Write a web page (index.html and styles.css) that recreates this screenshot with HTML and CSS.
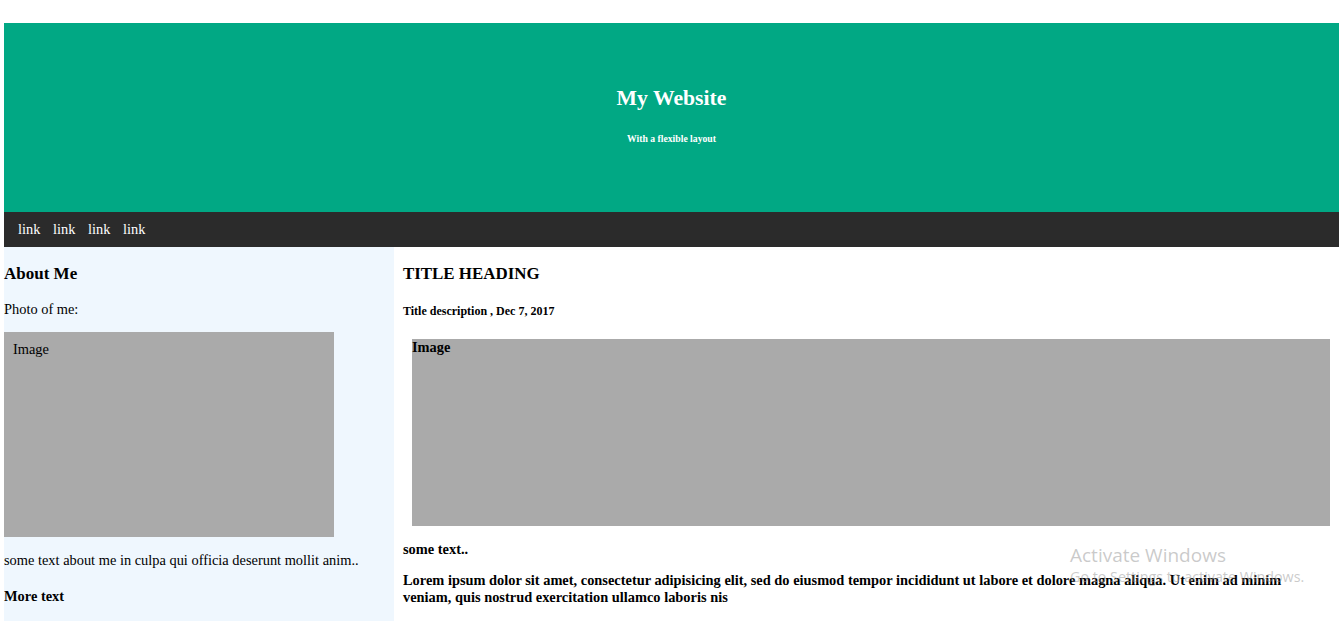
FILE: index.html
```html
<!DOCTYPE html>
<html>
<head>
<meta charset="utf-8">
<title>My Website</title>
<link rel="stylesheet" href="styles.css">
</head>
<body>
<div class="page">
  <header class="header">
    <h1 class="site-title">My Website</h1>
    <p class="site-sub">With a flexible layout</p>
  </header>
  <nav class="nav">
    <a href="#">link</a>
    <a href="#">link</a>
    <a href="#">link</a>
    <a href="#">link</a>
  </nav>
  <div class="row">
    <aside class="side">
      <h3 class="side-title">About Me</h3>
      <p class="side-label">Photo of me:</p>
      <div class="side-img">Image</div>
      <p class="side-text">some text about me in culpa qui officia deserunt mollit anim..</p>
      <p class="side-more">More text</p>
    </aside>
    <main class="main">
      <h2 class="main-title">TITLE HEADING</h2>
      <h5 class="main-desc">Title description , Dec 7, 2017</h5>
      <div class="main-img">Image</div>
      <p class="main-some">some text..</p>
      <p class="main-lorem">Lorem ipsum dolor sit amet, consectetur adipisicing elit, sed do eiusmod tempor incididunt ut labore et dolore magna aliqua. Ut enim ad minim veniam, quis nostrud exercitation ullamco laboris nis</p>
    </main>
  </div>
</div>
<div class="activate">
  <div class="activate-title">Activate Windows</div>
  <div class="activate-sub">Go to Settings to activate Windows.</div>
</div>
</body>
</html>
```

FILE: styles.css
```css
* { box-sizing: border-box; }
html, body { margin: 0; padding: 0; background: #ffffff; }
body {
  font-family: "Liberation Serif", "Times New Roman", serif;
  font-size: 14.4px;
  color: #000;
  overflow: hidden;
  height: 621px;
}
.page {
  padding: 23px 5px 0 4px;
}
.header {
  background: #01a884;
  height: 189px;
  padding-top: 63px;
  text-align: center;
  color: #fff;
}
.site-title {
  margin: 0;
  font-size: 21.7px;
  line-height: 25px;
  font-weight: bold;
}
.site-sub {
  margin: 22px 0 0;
  font-size: 9.7px;
  line-height: 11px;
  font-weight: bold;
}
.nav {
  background: #2b2b2b;
  height: 35px;
  display: flex;
  align-items: center;
  gap: 12.6px;
  padding: 0 0 2px 14px;
}
.nav a {
  color: #fff;
  text-decoration: none;
  font-size: 14.4px;
  line-height: 16px;
}
.row {
  display: flex;
  align-items: stretch;
  min-height: 380px;
}
.side {
  width: 390px;
  flex: none;
  background: #eff7fe;
  padding: 17px 0 0 0;
}
.side-title {
  margin: 0;
  font-size: 17px;
  line-height: 19px;
}
.side-label {
  margin: 18px 0 0;
  line-height: 16px;
}
.side-img {
  margin-top: 15px;
  width: 330px;
  height: 205px;
  background: #aaaaaa;
  padding: 9px 0 0 9px;
  line-height: 16px;
}
.side-text {
  margin: 15px 0 0;
  line-height: 16px;
}
.side-more {
  margin: 20px 0 0;
  font-weight: bold;
  line-height: 16px;
}
.main {
  flex: 1;
  padding: 17px 20px 0 9px;
}
.main-title {
  margin: 0;
  font-size: 16.9px;
  line-height: 19px;
}
.main-desc {
  margin: 21px 0 0;
  font-size: 12px;
  line-height: 14px;
}
.main-img {
  margin: 21px 0 0 9px;
  width: 918px;
  height: 187px;
  background: #aaaaaa;
  font-weight: bold;
  line-height: 16px;
}
.main-some {
  margin: 14.5px 0 0;
  font-weight: bold;
  line-height: 16px;
}
.main-lorem {
  margin: 15px 0 0;
  font-weight: bold;
  line-height: 17px;
}
.activate {
  position: absolute;
  left: 1070px;
  top: 543px;
  font-family: "Open Sans", "DejaVu Sans", sans-serif;
  color: rgba(150, 150, 150, 0.5);
  pointer-events: none;
}
.activate-title {
  font-size: 19px;
  line-height: 25px;
}
.activate-sub {
  font-size: 14.3px;
  line-height: 18px;
}
```
